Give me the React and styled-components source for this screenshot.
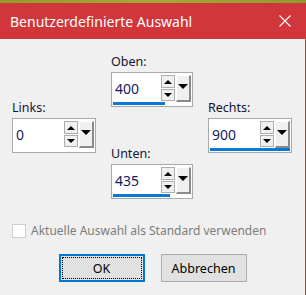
import styled, { createGlobalStyle } from "styled-components";

const Global = createGlobalStyle`
  html, body { margin: 0; padding: 0; background: #f0f0f0; overflow: hidden; }
  * { box-sizing: border-box; }
`;

const Fenster = styled.div`
  width: 306px;
  height: 295px;
  display: flex;
  flex-direction: column;
  background: #f0f0f0;
  font-family: "Noto Sans", "Open Sans", sans-serif;
`;

const Streifen = styled.div`
  height: 3px;
  background: linear-gradient(90deg, #8f9c2c, #a4a83a 50%, #8d9a30);
`;

const Titelleiste = styled.div`
  height: 36px;
  background: #d1363b;
  color: #fff;
  display: flex;
  align-items: center;
  justify-content: space-between;
  padding: 0 15px 0 10px;
  font-size: 14px;
`;

const Inhalt = styled.div`
  flex: 1;
  border-right: 1px solid #d1363b;
  padding: 15px 12px 0;
  display: flex;
  flex-direction: column;
`;

const Felder = styled.div`
  display: grid;
  grid-template-columns: 84px 82px 84px;
  column-gap: 15px;
  align-items: center;
`;

const Mitte = styled.div`
  display: flex;
  flex-direction: column;
  gap: 39px;
`;

const Gruppe = styled.div`
  display: flex;
  flex-direction: column;
  gap: 2px;
`;

const Bezeichnung = styled.div`
  font-size: 12.5px;
  line-height: 16px;
  color: #141432;
`;

const Kasten = styled.div`
  height: 35px;
  background: #fff;
  border: 1px solid #a9a9a9;
  padding: 1px 0 1px 0;
  display: flex;
  flex-direction: column;
`;

const Zeile = styled.div`
  height: 28px;
  display: flex;
  align-items: stretch;
`;

const Wert = styled.div`
  flex: 1;
  display: flex;
  align-items: center;
  padding-left: 3px;
  font-size: 14px;
  color: #14205e;
`;

const Pfeile = styled.div`
  width: 14px;
  display: flex;
  flex-direction: column;
  gap: 1px;
  padding-top: 1px;
`;

const PfeilKnopf = styled.div`
  height: ${(p) => (p.oben ? "13px" : "12px")};
  border: 1px solid #adadad;
  background: #f0f0f0;
  display: flex;
  align-items: center;
  justify-content: center;
`;

const Dreieck = styled.span`
  width: 0;
  height: 0;
  border-left: ${(p) => p.breite}px solid transparent;
  border-right: ${(p) => p.breite}px solid transparent;
  ${(p) =>
    p.hoch
      ? `border-bottom: ${p.breite}px solid #000;`
      : `border-top: ${p.breite}px solid #000;`}
`;

const Ausklapp = styled.div`
  width: 15px;
  margin: 1px 1px 0 1px;
  background: #f0f0f0;
  border-top: 1px solid #fff;
  border-left: 1px solid #fff;
  border-right: 2px solid #8a8a8a;
  border-bottom: 2px solid #8a8a8a;
  display: flex;
  align-items: center;
  justify-content: center;
  padding-bottom: 4px;
`;

const Spur = styled.div`
  height: 3px;
  margin: 0 1px;
`;

const Balken = styled.div`
  height: 100%;
  background: #0a78d7;
`;

const Auswahlzeile = styled.div`
  margin-top: 23px;
  display: flex;
  align-items: center;
  gap: 5px;
  font-size: 12px;
  color: #7d7d7d;
`;

const Haken = styled.span`
  width: 14px;
  height: 14px;
  background: #fff;
  border: 1px solid #cfcfcf;
`;

const Knopfleiste = styled.div`
  margin-top: 15px;
  display: flex;
  justify-content: center;
  gap: 16px;
`;

const Knopf = styled.div`
  width: 86px;
  height: 28px;
  display: flex;
  align-items: center;
  justify-content: center;
  font-size: 12.5px;
  color: #000;
  background: #e1e1e1;
  border: ${(p) => (p.aktiv ? "2px solid #0078d7" : "1px solid #adadad")};
  position: relative;
  ${(p) =>
    p.aktiv &&
    `&::after { content: ""; position: absolute; inset: 1px; border: 1px dotted #000; }`}
`;

const Schliessen = () => (
  <svg width="12" height="12" viewBox="0 0 12 12">
    <path d="M0.5 0.5 L11.5 11.5 M11.5 0.5 L0.5 11.5" stroke="#fff" strokeWidth="1.1" />
  </svg>
);

const SpinFeld = ({ titel, wert, max }) => (
  <Gruppe>
    <Bezeichnung>{titel}</Bezeichnung>
    <Kasten>
      <Zeile>
        <Wert>{wert}</Wert>
        <Pfeile>
          <PfeilKnopf oben>
            <Dreieck hoch breite={4} />
          </PfeilKnopf>
          <PfeilKnopf>
            <Dreieck breite={4} />
          </PfeilKnopf>
        </Pfeile>
        <Ausklapp>
          <Dreieck breite={5} />
        </Ausklapp>
      </Zeile>
      <Spur>
        <Balken style={{ width: `${(wert / max) * 100}%` }} />
      </Spur>
    </Kasten>
  </Gruppe>
);

export default function App() {
  return (
    <Fenster>
      <Global />
      <Streifen />
      <Titelleiste>
        <span>Benutzerdefinierte Auswahl</span>
        <Schliessen />
      </Titelleiste>
      <Inhalt>
        <Felder>
          <SpinFeld titel="Links:" wert={0} max={900} />
          <Mitte>
            <SpinFeld titel="Oben:" wert={400} max={600} />
            <SpinFeld titel="Unten:" wert={435} max={600} />
          </Mitte>
          <SpinFeld titel="Rechts:" wert={900} max={900} />
        </Felder>
        <Auswahlzeile>
          <Haken />
          <span>Aktuelle Auswahl als Standard verwenden</span>
        </Auswahlzeile>
        <Knopfleiste>
          <Knopf aktiv>OK</Knopf>
          <Knopf>Abbrechen</Knopf>
        </Knopfleiste>
      </Inhalt>
    </Fenster>
  );
}
